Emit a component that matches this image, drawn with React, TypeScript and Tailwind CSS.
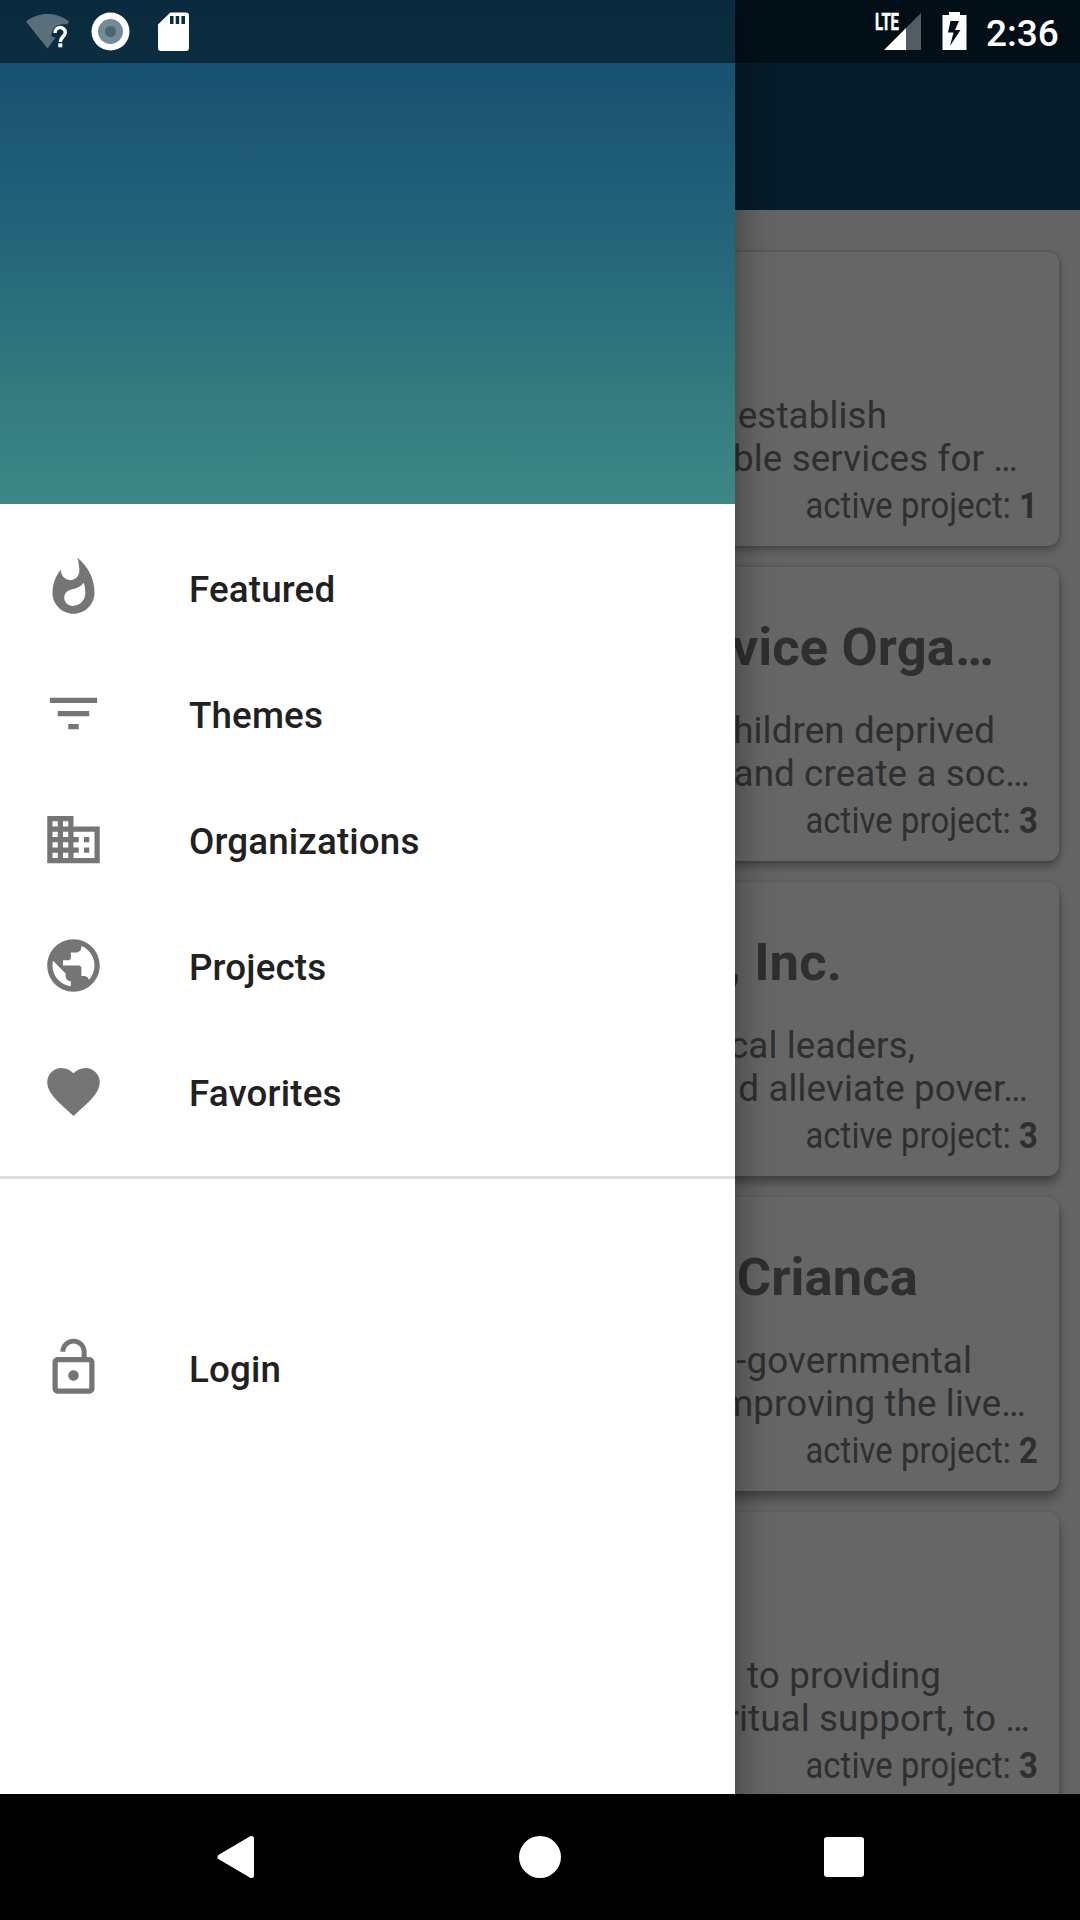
import { MdWhatshot, MdFilterList, MdBusiness, MdPublic, MdLockOpen } from "react-icons/md";
import type { ReactNode } from "react";

type Card = {
  title?: string;
  titlePad?: string;
  line1: string;
  pad1: string;
  line2: string;
  pad2: string;
  count: number;
  shadow: string;
};

const cards: Card[] = [
  {
    line1: "establish",
    pad1: "pr-[172px]",
    line2: "ble services for …",
    pad2: "pr-[41px]",
    count: 1,
    shadow: "shadow-[0_4px_10px_rgba(0,0,0,0.28),0_0_4px_rgba(0,0,0,0.2)]",
  },
  {
    title: "vice Orga…",
    titlePad: "pr-[65px]",
    line1: "hildren deprived",
    pad1: "pr-[64px]",
    line2: "and create a soc…",
    pad2: "pr-[29px]",
    count: 3,
    shadow: "shadow-[0_5px_10px_rgba(0,0,0,0.32),0_0_4px_rgba(0,0,0,0.18)]",
  },
  {
    title: ", Inc.",
    titlePad: "pr-[217px]",
    line1: "cal leaders,",
    pad1: "pr-[144px]",
    line2: "d alleviate pover…",
    pad2: "pr-[31px]",
    count: 3,
    shadow: "shadow-[0_7px_10px_rgba(0,0,0,0.32),0_0_4px_rgba(0,0,0,0.16)]",
  },
  {
    title: "Crianca",
    titlePad: "pr-[141px]",
    line1: "-governmental",
    pad1: "pr-[87px]",
    line2: "mproving the live…",
    pad2: "pr-[33px]",
    count: 2,
    shadow: "shadow-[0_8px_11px_rgba(0,0,0,0.32),0_0_4px_rgba(0,0,0,0.14)]",
  },
  {
    line1: "to providing",
    pad1: "pr-[118px]",
    line2: "ritual support, to …",
    pad2: "pr-[29px]",
    count: 3,
    shadow: "shadow-[0_9px_12px_rgba(0,0,0,0.32),0_0_4px_rgba(0,0,0,0.12)]",
  },
];

function ProjectCard({ card }: { card: Card }) {
  return (
    <article
      className={`flex h-[294px] shrink-0 flex-col rounded-[11px] bg-white pt-[50px] text-right text-[36.75px] leading-[43px] tracking-[0.12px] whitespace-pre text-[#757575] ${card.shadow}`}
    >
      <h2 className={`mb-[30px] h-[62px] text-[52.5px] leading-[61px] font-bold ${card.titlePad ?? ""}`}>
        {card.title}
      </h2>
      <p className={card.pad1}>{card.line1}</p>
      <p className={card.pad2}>{card.line2}</p>
      <p className="mt-1 mr-[21px] origin-right scale-x-[0.892]">
        active project: <b>{card.count}</b>
      </p>
    </article>
  );
}

function MenuItem({ icon, label }: { icon: ReactNode; label: string }) {
  return (
    <li className="flex h-[126px] items-center pl-[42px] text-[63px] text-[#757575]">
      <span className="-mt-0.5">{icon}</span>
      <span className="mt-0.5 ml-[84px] text-[36.75px] leading-[43px] font-medium tracking-[0.15px] text-[#212121]">
        {label}
      </span>
    </li>
  );
}

function Heart() {
  return (
    <svg width="63" height="63" viewBox="0 0 24 24" fill="currentColor">
      <path d="M12 21.35l-1.45-1.32C5.4 15.36 2 12.28 2 8.5 2 5.42 4.42 3 7.5 3c1.74 0 3.41.81 4.5 2.09C13.09 3.81 14.76 3 16.5 3 19.58 3 22 5.42 22 8.5c0 3.78-3.4 6.86-8.55 11.54L12 21.35z" />
    </svg>
  );
}

function StatusBar() {
  return (
    <div className="absolute inset-x-0 top-0 flex h-[63px] items-start bg-black/44 text-white">
      <svg className="mt-3 ml-6" width="48" height="40" viewBox="24 12 48 40">
        <path
          d="M26 21.500C38 11.500 57 11.500 69 21.500L67.300 24.500C58 23 51.500 27 51.500 36.500L55.500 37.500 47.500 48.500Z"
          fill="#fff"
          fillOpacity=".32"
        />
        <path
          d="M55 33C55 25.900 65.300 25.900 65.300 32.500C65.300 36.700 60.300 36.700 60.300 42"
          fill="none"
          stroke="#fff"
          strokeWidth="3.500"
        />
        <rect x="58.300" y="43.300" width="4" height="4" fill="#fff" />
      </svg>
      <svg className="mt-3 ml-[19px]" width="39" height="39" viewBox="0 0 39 39">
        <circle cx="19.500" cy="19.500" r="19" fill="#fff" />
        <circle cx="19.500" cy="19.500" r="12.500" fill="#748a96" />
        <circle cx="19.500" cy="19.500" r="5.600" fill="#4b6675" />
      </svg>
      <svg className="mt-3 ml-7" width="31" height="39" viewBox="0 0 31 39">
        <path
          fillRule="evenodd"
          d="M12.300.500H28a3 3 0 0 1 3 3V36a3 3 0 0 1-3 3H3a3 3 0 0 1-3-3V12.500ZM12 4v8h3.500V4Zm5.700 0v8h3.500V4Zm5.700 0v8H27V4Z"
          fill="#fff"
        />
      </svg>
      <svg className="mt-1 ml-[680px] overflow-visible" width="53" height="47" viewBox="-6 -8 53 47">
        <path d="M46 1V38H31V16Z" fill="#fff" fillOpacity=".32" />
        <path d="M31 16V38H9Z" fill="#fff" />
        <text
          x="0"
          y="18"
          fill="#fff"
          stroke="#fff"
          strokeWidth=".5"
          fontFamily="Roboto"
          fontWeight="700"
          fontSize="23"
          textLength="24"
          lengthAdjust="spacingAndGlyphs"
        >
          LTE
        </text>
      </svg>
      <svg className="mt-3 ml-[20px]" width="26" height="39" viewBox="0 0 26 39">
        <path
          fillRule="evenodd"
          d="M7 0H18V3H24.500V38H.500V3H7ZM8.500 9L6 20.500H11.500L8 34 18.500 18H13L17 9Z"
          fill="#fff"
        />
      </svg>
      <span className="mt-[11px] ml-[18px] text-[37px] leading-[45px] font-medium">2:36</span>
    </div>
  );
}

export default function App() {
  return (
    <div className="relative flex h-[1920px] w-[1080px] flex-col overflow-hidden bg-[#fafafa] font-[Roboto,sans-serif]">
      <header className="h-[210px] shrink-0 bg-[#0d466a]" />
      <main className="flex min-h-0 flex-1 flex-col gap-[21px] overflow-hidden px-[21px] pt-[42px]">
        {cards.map((card, i) => (
          <ProjectCard key={i} card={card} />
        ))}
      </main>

      <div className="absolute inset-0 bg-black/60" />

      <aside className="absolute inset-y-0 left-0 w-[735px] bg-white shadow-[0_0_36px_rgba(0,0,0,0.42)]">
        <div className="h-[504px] bg-[linear-gradient(to_bottom,#124b70_0%,#185171_14%,#205f78_38%,#296e7b_60%,#347c7f_80%,#3d8887_100%)]" />
        <ul className="border-b-[3px] border-[#dfdfdf] pt-[21px] pb-[21px]">
          <MenuItem icon={<MdWhatshot />} label="Featured" />
          <MenuItem icon={<MdFilterList />} label="Themes" />
          <MenuItem icon={<MdBusiness />} label="Organizations" />
          <MenuItem icon={<MdPublic />} label="Projects" />
          <MenuItem icon={<Heart />} label="Favorites" />
        </ul>
        <ul className="pt-[126px]">
          <MenuItem icon={<MdLockOpen />} label="Login" />
        </ul>
      </aside>

      <StatusBar />

      <nav className="relative flex h-[126px] shrink-0 items-center bg-black">
        <svg className="ml-[217px]" width="38" height="44" viewBox="0 0 38 44">
          <path
            d="M3 22L34.500 3.500V40.500Z"
            fill="#fff"
            stroke="#fff"
            strokeWidth="5"
            strokeLinejoin="round"
          />
        </svg>
        <div className="ml-[264px] size-[42px] rounded-full bg-white" />
        <div className="ml-[263px] size-10 rounded-[3px] bg-white" />
      </nav>
    </div>
  );
}
